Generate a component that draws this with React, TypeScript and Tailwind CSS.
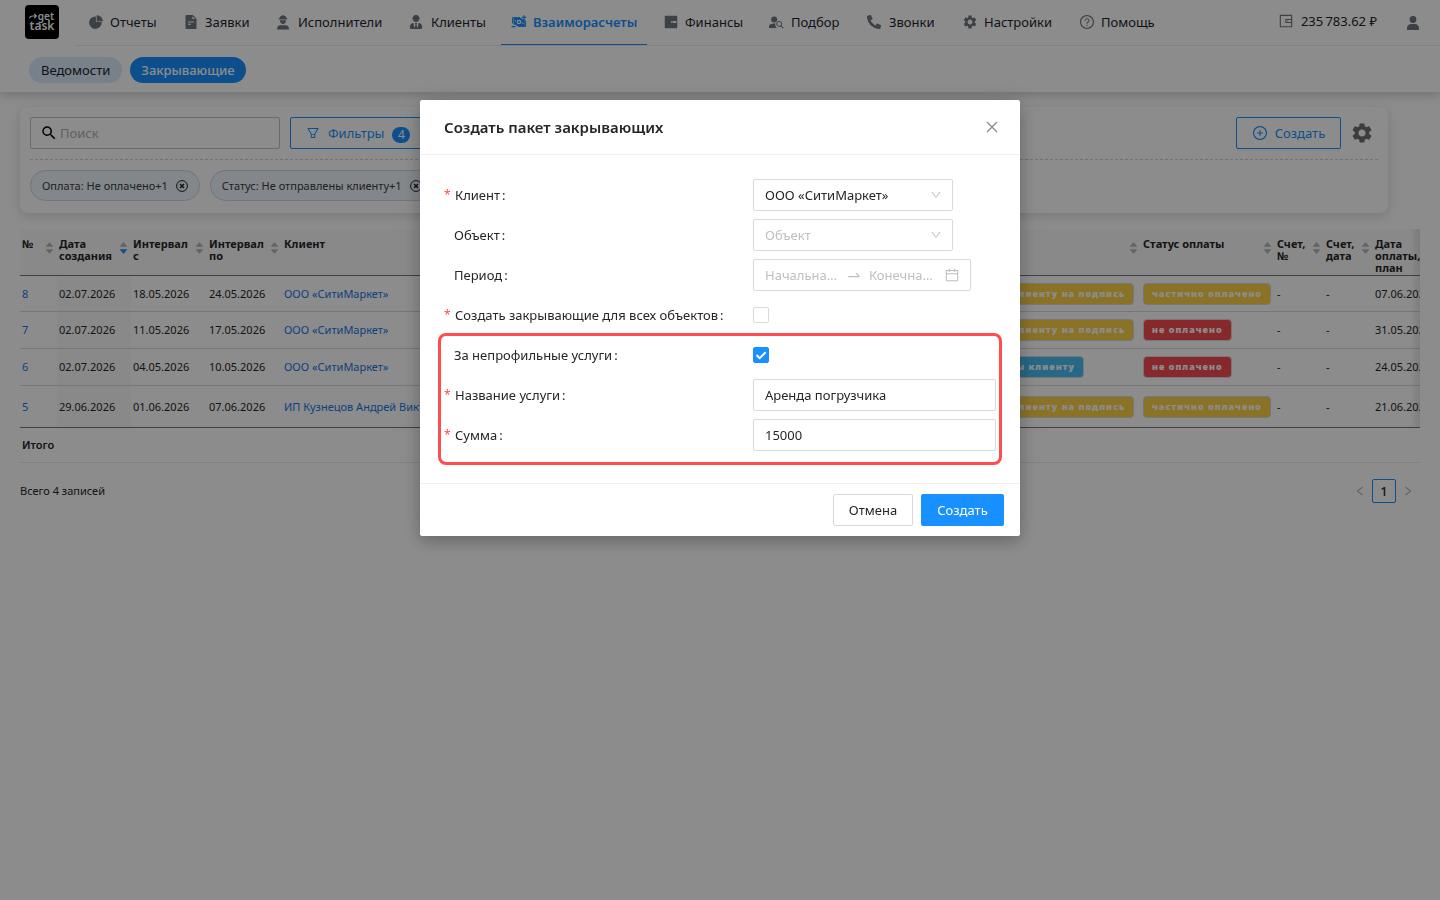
import type { ReactNode } from "react";
import {
  AiFillCaretDown,
  AiFillCaretUp,
  AiFillFileText,
  AiFillPieChart,
  AiFillWallet,
  AiOutlineCalendar,
  AiOutlineClose,
  AiOutlineDown,
  AiOutlineFilter,
  AiOutlineLeft,
  AiOutlinePlusCircle,
  AiOutlineQuestionCircle,
  AiOutlineRight,
  AiOutlineSwapRight,
  AiOutlineWallet,
} from "react-icons/ai";
import { FaPhoneAlt, FaUserTie } from "react-icons/fa";
import { MdSearch, MdSettings } from "react-icons/md";

function WorkerIcon() {
  return (
    <svg viewBox="0 0 14 15" className="h-[15px] w-[14px]" fill="currentColor" aria-hidden="true">
      <path d="M3.500 3.200C3.600 1.800 4.700 1 5.900.8V.2h2.200v.6c1.200.2 2.300 1 2.400 2.400h.7v1.200H2.800V3.200z" />
      <path d="M3.900 5.300h6.200c0 2.300-1.300 3.800-3.100 3.800S3.900 7.600 3.900 5.300z" />
      <path d="M1 14.500c0-2.700 1.300-4.200 3.300-4.200h5.400c2 0 3.300 1.500 3.300 4.200z" />
    </svg>
  );
}

function SettlementIcon() {
  return (
    <svg viewBox="0 0 16 14" className="h-[14px] w-[16px]" fill="none" stroke="currentColor" aria-hidden="true">
      <path d="M2.500 3h8.200v1.200h3.100V11H5.400V9.800H2.500z" fill="currentColor" stroke="none" />
      <path d="M1.600 8.500V2.600H9M14.600 5.500v5.900H7" strokeWidth="1" />
      <path d="M10.800 2.400h4.400M13 .3v4.200M.5 11.600h4.200" strokeWidth="1.200" />
      <circle cx="8" cy="7" r="2.300" fill="#fff" stroke="none" />
      <path d="M4.300 5v1.400M11.800 7.600V9" stroke="#fff" strokeWidth="1" />
      <circle cx="8" cy="7" r="1.100" fill="currentColor" stroke="none" />
    </svg>
  );
}

function PersonSearchIcon() {
  return (
    <svg viewBox="0 0 15 13" className="h-[13px] w-[15px]" fill="currentColor" aria-hidden="true">
      <circle cx="5.200" cy="3.600" r="3" />
      <path d="M0 12v-1.600c0-2 2.400-2.900 5.200-2.900h1.300c-.5 1.700 0 3.300 1.300 4.500z" />
      <circle cx="10.200" cy="7.900" r="2.500" fill="none" stroke="currentColor" strokeWidth="1" />
      <path d="M12 9.800l2.300 2.400" stroke="currentColor" strokeWidth="1.100" />
    </svg>
  );
}

function UserIcon() {
  return (
    <svg viewBox="0 0 12 14" className="h-[14px] w-[12px]" fill="currentColor" aria-hidden="true">
      <circle cx="6" cy="3.500" r="3.400" />
      <path d="M0 14v-1.500C0 9.500 1.800 8 4 8h4c2.200 0 4 1.500 4 4.500V14z" />
    </svg>
  );
}

function CircleX() {
  return (
    <svg viewBox="0 0 12 12" className="size-3" fill="none" stroke="#222" aria-hidden="true">
      <circle cx="6" cy="6" r="5.400" strokeWidth="1" />
      <path d="M4 4l4 4M8 4l-4 4" strokeWidth="1.500" />
    </svg>
  );
}

const navItems: { label: string; width: string; icon: ReactNode; active?: boolean }[] = [
  { label: "Отчеты", width: "w-[95px]", icon: <AiFillPieChart className="size-4" /> },
  { label: "Заявки", width: "w-[93px]", icon: <AiFillFileText className="size-4" /> },
  { label: "Исполнители", width: "w-[133px]", icon: <WorkerIcon /> },
  { label: "Клиенты", width: "w-[102px]", icon: <FaUserTie className="size-[14px]" /> },
  { label: "Взаиморасчеты", width: "w-[152px]", icon: <SettlementIcon />, active: true },
  { label: "Финансы", width: "w-[106px]", icon: <AiFillWallet className="size-4" /> },
  { label: "Подбор", width: "w-[98px]", icon: <PersonSearchIcon /> },
  { label: "Звонки", width: "w-[95px]", icon: <FaPhoneAlt className="size-[14px]" /> },
  { label: "Настройки", width: "w-[117px]", icon: <MdSettings className="size-4" /> },
  { label: "Помощь", width: "w-[103px]", icon: <AiOutlineQuestionCircle className="size-4" /> },
];

function TopBar() {
  return (
    <header className="bg-white shadow-[0_3px_10px_rgba(0,0,0,0.2)]">
      <div className="flex">
        <div className="w-[75px] pt-[5px] pl-[25px]">
          <a
            href="#home"
            aria-label="get task"
            className="flex size-[34px] flex-col items-center justify-center rounded-[4px] bg-black pb-[3px] font-semibold text-white"
          >
            <span className="flex items-center gap-px self-end pr-[5px] text-[10px] leading-[9px]">
              <svg viewBox="0 0 9 6" className="h-[6px] w-[8px]" fill="none" stroke="currentColor" strokeWidth="1.400" aria-hidden="true">
                <path d="M.6 5.500C.8 3.500 2.500 3 4 3h4M6 .8L8.200 3 6 5.200" />
              </svg>
              get
            </span>
            <span className="text-[12px] leading-[9px]">task</span>
          </a>
        </div>
        <div className="flex h-[46px] flex-1 items-stretch border-b border-[#ececec]">
          <nav className="flex">
            {navItems.map((item) => (
              <div key={item.label} className={`${item.width} shrink-0 pl-[3px]`}>
                <a
                  href={`#${item.label}`}
                  className={
                    item.active
                      ? "inline-flex h-[45px] items-center gap-[6px] border-b border-[#1890ff] px-[10px] font-semibold whitespace-nowrap text-[#1890ff]"
                      : "inline-flex h-[45px] items-center gap-[6px] border-b border-transparent px-[10px] whitespace-nowrap text-[#1f2430]"
                  }
                >
                  <span className={item.active ? "flex w-4" : "flex w-4 text-[#6f757d]"}>{item.icon}</span>
                  {item.label}
                </a>
              </div>
            ))}
          </nav>
          <div className="ml-auto flex items-center gap-[30px] pr-[21px]">
            <div className="flex items-center gap-[7px] pb-[3px]">
              <AiOutlineWallet className="size-4 text-[#6f757d]" />
              <span className="text-[#1f2430]">235&#8201;783.62&nbsp;₽</span>
            </div>
            <span className="text-[#6f757d]">
              <UserIcon />
            </span>
          </div>
        </div>
      </div>
      <div className="flex h-[46px] items-start gap-2 pt-[11px] pl-[29px]">
        <a href="#statements" className="flex h-[26px] items-center rounded-full bg-[#dbebfa] px-3 text-[#1f2430]">
          Ведомости
        </a>
        <a href="#closing" className="flex h-[26px] items-center rounded-full bg-[#1890ff] px-[11px] font-medium text-white">
          Закрывающие
        </a>
      </div>
    </header>
  );
}

function FilterChip({ text }: { text: string }) {
  return (
    <span className="flex h-[31px] items-center gap-2 rounded-full border border-[#cfd3e6] bg-[#eef5fc] px-[11px] text-[11px] whitespace-nowrap text-[#3c3c3c]">
      {text}
      <button type="button" aria-label={`Убрать: ${text}`}>
        <CircleX />
      </button>
    </span>
  );
}

function FilterCard() {
  return (
    <section className="mr-8 rounded-lg bg-white px-[10px] pt-[10px] pb-3 shadow-[0_3px_12px_rgba(0,0,0,0.14)]">
      <div className="flex items-center gap-[10px] border-b border-dashed border-[#cfcfcf] pb-[10px]">
        <div className="flex h-8 w-[250px] items-center gap-[2px] rounded-[2px] border border-[#c4c4c4] pl-[9px]">
          <MdSearch className="size-[18px] shrink-0 text-black" />
          <input
            type="text"
            aria-label="Поиск"
            placeholder="Поиск"
            className="w-full min-w-0 bg-transparent outline-none placeholder:text-[#b0b0b0]"
          />
        </div>
        <button type="button" className="flex h-8 items-center rounded-[2px] border border-[#1890ff] px-[15px] text-[#1890ff]">
          <AiOutlineFilter className="mr-2 size-[14px]" />
          Фильтры
          <span className="mt-[3px] ml-2 flex h-4 w-[18px] items-center justify-center rounded-full bg-[#1890ff] text-[12px] text-white">
            4
          </span>
        </button>
        <button
          type="button"
          className="ml-auto flex h-8 w-[105px] items-center justify-center gap-[7px] rounded-[2px] border border-[#1890ff] text-[#1890ff] shadow-[0_2px_0_rgba(0,0,0,0.03)]"
        >
          <AiOutlinePlusCircle className="size-4" />
          Создать
        </button>
        <button type="button" aria-label="Настройки таблицы" className="-ml-px mr-1">
          <MdSettings className="size-6 text-[#6e6e6e]" />
        </button>
      </div>
      <div className="flex gap-[10px] pt-[10px]">
        <FilterChip text="Оплата: Не оплачено+1" />
        <FilterChip text="Статус: Не отправлены клиенту+1" />
      </div>
    </section>
  );
}

const columns = [
  { title: "№", width: "w-[37px]", sorter: true },
  { title: "Дата создания", width: "w-[74px]", sorter: true, sorted: true },
  { title: "Интервал с", width: "w-[76px]", sorter: true },
  { title: "Интервал по", width: "w-[75px]", sorter: true },
  { title: "Клиент", width: "w-auto", sorter: false },
  { title: "Статус", width: "w-[212px]", sorter: true },
  { title: "Статус оплаты", width: "w-[134px]", sorter: true },
  { title: "Счет, №", width: "w-[49px]", sorter: true },
  { title: "Счет, дата", width: "w-[49px]", sorter: true },
  { title: "Дата оплаты, план", width: "w-[47px]", sorter: false },
];

type Tone = "yellow" | "red" | "blue";

const tones: Record<Tone, string> = {
  yellow: "bg-[#fbd048]",
  red: "bg-[#f64c50]",
  blue: "bg-[#46bdf5]",
};

function Badge({ tone, text }: { tone: Tone; text: string }) {
  return (
    <span
      className={`${tones[tone]} inline-flex h-[22px] items-center rounded-[4px] border border-[#d9d9d9] px-2 align-middle text-[9px] font-black tracking-[1px] text-white`}
    >
      {text}
    </span>
  );
}

const onSigning = "отправлены клиенту на подпись";
const rows: {
  id: string;
  height: string;
  created: string;
  from: string;
  to: string;
  client: string;
  status: [Tone, string];
  payment: [Tone, string];
  due: string;
}[] = [
  { id: "8", height: "h-9", created: "02.07.2026", from: "18.05.2026", to: "24.05.2026", client: "ООО «СитиМаркет»", status: ["yellow", onSigning], payment: ["yellow", "частично оплачено"], due: "07.06.2026" },
  { id: "7", height: "h-[37px]", created: "02.07.2026", from: "11.05.2026", to: "17.05.2026", client: "ООО «СитиМаркет»", status: ["yellow", onSigning], payment: ["red", "не оплачено"], due: "31.05.2026" },
  { id: "6", height: "h-[37px]", created: "02.07.2026", from: "04.05.2026", to: "10.05.2026", client: "ООО «СитиМаркет»", status: ["blue", "не отправлены клиенту"], payment: ["red", "не оплачено"], due: "24.05.2026" },
  { id: "5", height: "h-[42px]", created: "29.06.2026", from: "01.06.2026", to: "07.06.2026", client: "ИП Кузнецов Андрей Викторович", status: ["yellow", onSigning], payment: ["yellow", "частично оплачено"], due: "21.06.2026" },
];

function ClosingTable() {
  return (
    <div className="relative overflow-hidden">
      <table className="w-full table-fixed border-separate border-spacing-0 text-left text-[11px] text-[#262626]">
        <thead>
          <tr className="h-[47px]">
            {columns.map((column) => (
              <th
                key={column.title}
                className={`${column.width} border-b border-[#70777c] bg-[#fafafa] pt-[9px] pl-[2px] align-top leading-3 font-bold`}
              >
                <span className="flex justify-between">
                  <span className="min-w-0">{column.title}</span>
                  {column.sorter && (
                    <span className="mt-px mr-[2px] flex shrink-0 flex-col text-[#b5b5b5]">
                      <AiFillCaretUp className="-mb-1 size-[11px]" />
                      <AiFillCaretDown className={column.sorted ? "size-[11px] text-[#1890ff]" : "size-[11px]"} />
                    </span>
                  )}
                </span>
              </th>
            ))}
          </tr>
        </thead>
        <tbody className="[&_td]:border-b [&_td]:border-[#d5d8da] [&_td]:pl-[2px] [&_td]:whitespace-nowrap [&>tr:last-child>td]:border-[#70777c]">
          {rows.map((row) => (
            <tr key={row.id} className={row.height}>
              <td>
                <a href={`#package-${row.id}`} className="text-[#1677e8]">
                  {row.id}
                </a>
              </td>
              <td className="bg-[#fafafa]">{row.created}</td>
              <td>{row.from}</td>
              <td>{row.to}</td>
              <td>
                <a href={`#client-${row.id}`} className="text-[#1677e8]">
                  {row.client}
                </a>
              </td>
              <td>
                <Badge tone={row.status[0]} text={row.status[1]} />
              </td>
              <td>
                <Badge tone={row.payment[0]} text={row.payment[1]} />
              </td>
              <td>-</td>
              <td>-</td>
              <td>{row.due}</td>
            </tr>
          ))}
        </tbody>
        <tfoot>
          <tr className="h-[35px]">
            <td colSpan={10} className="border-b border-[#ececec] bg-white pl-[2px] font-semibold">
              Итого
            </td>
          </tr>
        </tfoot>
      </table>
      <div className="pointer-events-none absolute top-0 right-0 h-[198px] w-[10px] bg-linear-to-l from-black/10 to-transparent" />
    </div>
  );
}

function FormRow({ label, htmlFor, required, children }: { label: string; htmlFor: string; required?: boolean; children: ReactNode }) {
  return (
    <div className="grid h-8 grid-cols-[309px_1fr] items-center">
      <label htmlFor={htmlFor} className={required ? "flex items-center gap-[5px] whitespace-nowrap" : "flex items-center pl-[10px] whitespace-nowrap"}>
        {required && <span className="w-[6px] text-[12px] text-[#ff4d4f]">*</span>}
        <span>
          {label}
          <span className="ml-[2px]">:</span>
        </span>
      </label>
      <div className="flex items-center">{children}</div>
    </div>
  );
}

function SelectBox({ id, text, muted }: { id: string; text: string; muted?: boolean }) {
  return (
    <div className="relative w-[200px]">
      <select
        id={id}
        className={
          muted
            ? "h-8 w-full appearance-none rounded-[2px] border border-[#d9d9d9] bg-white pr-7 pl-[11px] text-[#bfbfbf]"
            : "h-8 w-full appearance-none rounded-[2px] border border-[#d9d9d9] bg-white pr-7 pl-[11px] text-[#262626]"
        }
      >
        <option>{text}</option>
      </select>
      <AiOutlineDown className="pointer-events-none absolute top-[10px] right-[11px] size-3 text-[#bfbfbf]" />
    </div>
  );
}

function CheckBox({ id, checked }: { id: string; checked?: boolean }) {
  return (
    <span className="relative flex size-4">
      <input
        id={id}
        type="checkbox"
        defaultChecked={checked}
        className="peer size-4 appearance-none rounded-[2px] border border-[#d9d9d9] bg-white checked:border-[#1890ff] checked:bg-[#1890ff]"
      />
      <svg
        viewBox="0 0 16 16"
        className="pointer-events-none absolute inset-0 hidden size-4 peer-checked:block"
        fill="none"
        stroke="#fff"
        strokeWidth="2"
        aria-hidden="true"
      >
        <path d="M3.500 8l3.200 3.200L12.600 5.300" />
      </svg>
    </span>
  );
}

function TextBox({ id, value }: { id: string; value: string }) {
  return (
    <input
      id={id}
      type="text"
      defaultValue={value}
      className="h-8 w-full rounded-[2px] border border-[#d9d9d9] bg-white px-[11px] outline-none"
    />
  );
}

function CreatePackageDialog() {
  return (
    <div className="fixed inset-0 flex items-start justify-center bg-black/45 pt-[100px]">
      <div
        role="dialog"
        aria-modal="true"
        aria-labelledby="dialog-title"
        className="w-[600px] rounded-[2px] bg-white text-[#262626] shadow-[0_6px_16px_rgba(0,0,0,0.2),0_0_28px_rgba(0,0,0,0.12)]"
      >
        <div className="flex h-[55px] items-center justify-between border-b border-[#f0f0f0] pr-5 pl-6">
          <h2 id="dialog-title" className="text-[15px] font-semibold">
            Создать пакет закрывающих
          </h2>
          <button type="button" aria-label="Закрыть" className="text-[#8c8c8c]">
            <AiOutlineClose className="size-4" />
          </button>
        </div>
        <form id="package-form" className="flex flex-col gap-2 px-6 pt-6 pb-8">
          <FormRow label="Клиент" htmlFor="client" required>
            <SelectBox id="client" text="ООО «СитиМаркет»" />
          </FormRow>
          <FormRow label="Объект" htmlFor="object">
            <SelectBox id="object" text="Объект" muted />
          </FormRow>
          <FormRow label="Период" htmlFor="period-start">
            <div className="flex h-8 w-[218px] items-center rounded-[2px] border border-[#d9d9d9] px-[10px] text-[#bfbfbf]">
              <input
                id="period-start"
                type="text"
                placeholder="Начальная дата"
                className="ml-px w-[74px] min-w-0 text-ellipsis outline-none placeholder:text-[#bfbfbf]"
              />
              <AiOutlineSwapRight className="mx-[7px] size-4 shrink-0" />
              <input
                type="text"
                aria-label="Конечная дата"
                placeholder="Конечная дата"
                className="w-[66px] min-w-0 text-ellipsis outline-none placeholder:text-[#bfbfbf]"
              />
              <AiOutlineCalendar className="ml-auto size-4 shrink-0" />
            </div>
          </FormRow>
          <FormRow label="Создать закрывающие для всех объектов" htmlFor="all-objects" required>
            <CheckBox id="all-objects" />
          </FormRow>
          <div className="relative flex flex-col gap-2">
            <div className="pointer-events-none absolute -inset-x-[6px] -top-[6px] -bottom-[14px] rounded-lg border-3 border-[#ff4d4f]" />
            <FormRow label="За непрофильные услуги" htmlFor="non-core">
              <CheckBox id="non-core" checked />
            </FormRow>
            <FormRow label="Название услуги" htmlFor="service" required>
              <TextBox id="service" value="Аренда погрузчика" />
            </FormRow>
            <FormRow label="Сумма" htmlFor="amount" required>
              <TextBox id="amount" value="15000" />
            </FormRow>
          </div>
        </form>
        <div className="flex justify-end gap-2 border-t border-[#f0f0f0] px-4 py-[10px]">
          <button type="button" className="h-8 w-20 rounded-[2px] border border-[#d9d9d9]">
            Отмена
          </button>
          <button type="submit" form="package-form" className="h-8 w-[83px] rounded-[2px] bg-[#1890ff] text-white">
            Создать
          </button>
        </div>
      </div>
    </div>
  );
}

export default function App() {
  return (
    <div className="min-h-screen bg-white font-['Noto_Sans','Segoe_UI',sans-serif] text-[13px] leading-5 text-[#262626]">
      <TopBar />
      <main className="px-5 pt-[15px]">
        <FilterCard />
        <div className="pt-4">
          <ClosingTable />
        </div>
        <div className="flex items-center justify-between pt-4 text-[11px]">
          <span>Всего 4 записей</span>
          <div className="flex items-center pr-[6px]">
            <button type="button" aria-label="Предыдущая страница" className="mr-[6px] text-[#a6a6a6]">
              <AiOutlineLeft className="size-3" />
            </button>
            <button type="button" className="size-6 rounded-[2px] border border-[#1890ff] text-[13px] font-medium">
              1
            </button>
            <button type="button" aria-label="Следующая страница" className="ml-[6px] text-[#a6a6a6]">
              <AiOutlineRight className="size-3" />
            </button>
          </div>
        </div>
      </main>
      <CreatePackageDialog />
    </div>
  );
}
